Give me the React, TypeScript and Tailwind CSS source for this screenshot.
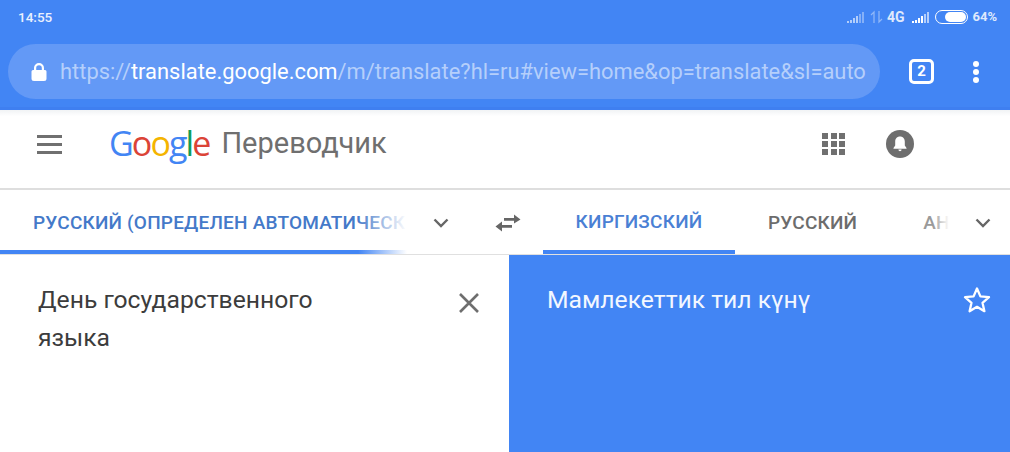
import React from "react";

const Chevron = () => (
  <svg width="16" height="10" viewBox="0 0 16 10" fill="none" stroke="#666" strokeWidth="2.4"><path d="M1.500 1.500 8 8l6.500-6.500" /></svg>
);

const Signal = ({ op = 1 }: { op?: number }) => (
  <svg width="18" height="12" viewBox="0 0 18 12" fill="#fff" opacity={op}>
    <rect x="0" y="10" width="2" height="2" /><rect x="3" y="9" width="2" height="3" /><rect x="6" y="7" width="2" height="5" /><rect x="9" y="5" width="2" height="7" /><rect x="12" y="3" width="2" height="9" opacity=".6" /><rect x="15" y="1" width="2" height="11" opacity=".6" />
  </svg>
);

export default function App() {
  return (
    <div className="w-[1010px] h-[452px] overflow-hidden bg-white flex flex-col font-['Roboto',sans-serif]">
      <div className="h-[110px] shrink-0 bg-[#4285f4] flex flex-col border-b-[3px] border-[#3f7ff0]">
        <div className="h-[44px] shrink-0 flex items-center justify-between pl-[18px] pr-[13px] pb-[10px] text-white font-medium">
          <span className="text-[#eaf1fe] text-[13.5px]">14:55</span>
          <div className="flex items-center text-[#dfe9fc] text-[13px] font-bold">
            <Signal op={0.6} />
            <svg className="ml-[5px] mr-[3px] opacity-40" width="14" height="14" viewBox="0 0 14 14" fill="none" stroke="#fff" strokeWidth="1.3"><path d="M4 13V2L1 5M9 1v11l3-3" /></svg>
            <span className="mr-[8px] text-[14px]">4G</span>
            <Signal />
            <div className="ml-[5px] mr-[4px] w-[33px] h-[14px] rounded-full border border-white p-[1px] flex justify-end">
              <div className="w-[21px] h-full rounded-full bg-white" />
            </div>
            <span>64%</span>
          </div>
        </div>
        <div className="flex items-center pl-[8px]">
          <div className="w-[872px] h-[55px] rounded-full bg-[#6399f6] flex items-center pl-[22px] pr-[13px] overflow-hidden">
            <svg className="shrink-0" width="18" height="20" viewBox="0 0 18 20"><path fill="#fff" d="M4 8V6a5 5 0 0 1 10 0v2h1a1.500 1.500 0 0 1 1.500 1.500v7A2.500 2.500 0 0 1 14 19H4a2.500 2.500 0 0 1-2.500-2.500v-7A1.500 1.500 0 0 1 3 8zm2.200 0h5.600V6a2.800 2.800 0 0 0-5.600 0z" /></svg>
            <div className="ml-[12px] pt-[2px] text-[21.9px] whitespace-nowrap overflow-hidden text-[#b5cffb]">
              https://<span className="text-white">translate.google.com</span>/m/translate?hl=ru#view=home&amp;op=translate&amp;sl=auto
            </div>
          </div>
          <div className="ml-[29px] w-[25px] h-[25px] rounded-[5px] border-[3px] border-white flex items-center justify-center text-white text-[15px] font-bold">2</div>
          <div className="ml-[39px] flex flex-col gap-[2px]">
            <div className="w-[6px] h-[6px] rounded-full bg-white" />
            <div className="w-[6px] h-[6px] rounded-full bg-white" />
            <div className="w-[6px] h-[6px] rounded-full bg-white" />
          </div>
        </div>
      </div>

      <div className="h-[80px] shrink-0 flex items-center border-b-2 border-[#dedede] bg-gradient-to-b from-[#f1f3f5] to-white to-[8%] pb-[10px] pr-[96px]">
        <div className="ml-[37px] w-[25px] flex flex-col gap-[5px]">
          <div className="h-[3px] bg-[#707070]" /><div className="h-[3px] bg-[#707070]" /><div className="h-[3px] bg-[#707070]" />
        </div>
        <div className="ml-[47px] text-[34px] tracking-[-1.9px] font-medium font-['Open_Sans',sans-serif] leading-none pb-[2px]">
          <span className="text-[#4285f4]">G</span><span className="text-[#db4437]">o</span><span className="text-[#f4b400]">o</span><span className="text-[#4285f4]">g</span><span className="text-[#0f9d58]">l</span><span className="text-[#db4437]">e</span>
        </div>
        <span className="ml-[12px] text-[29px] text-[#6f6f6f]">Переводчик</span>
        <div className="ml-auto grid grid-cols-3 gap-x-[2.5px] gap-y-[2px]">
          {Array.from({ length: 9 }).map((_, i) => <div key={i} className="w-[6px] h-[6px] bg-[#707070]" />)}
        </div>
        <div className="ml-[41px] w-[28px] h-[28px] rounded-full bg-[#6e6e6e] flex items-center justify-center">
          <svg width="18" height="18" viewBox="0 0 18 18" fill="#fff"><path d="M9 1.500c-3 0-4.800 2.300-4.800 5v4L2.500 13v.8h13V13l-1.700-2.500v-4c0-2.700-1.800-5-4.800-5zM7.400 14.600h3.200a1.600 1.600 0 0 1-3.200 0z" /></svg>
        </div>
      </div>

      <div className="h-[65px] shrink-0 flex border-b border-[#e0e0e0]">
        <div className="w-[407px] shrink-0 relative flex items-center pl-[33px] pt-[2px] overflow-hidden">
          <span className="whitespace-nowrap text-[19px] font-medium tracking-[0.2px] text-[#4479c9]">РУССКИЙ (ОПРЕДЕЛЕН АВТОМАТИЧЕСК</span>
          <div className="absolute right-0 top-0 h-full w-[50px] bg-gradient-to-r from-transparent to-white" />
          <div className="absolute left-0 bottom-0 w-full h-[4px] bg-gradient-to-r from-[#4285f4] from-[88%] to-transparent" />
        </div>
        <div className="ml-[26px] flex items-center pt-[2px]"><Chevron /></div>
        <div className="ml-[46px] flex items-center pt-[2px]">
          <svg width="26" height="20" viewBox="0 0 26 20" fill="#666"><path d="M9 5h10V1.500L25.500 6.500 19 10.500V7.800H9zM17 12H7V8.500L.5 13.500 7 18.500v-3.700h10z" /></svg>
        </div>
        <div className="ml-[22px] w-[192px] shrink-0 h-full border-b-[4px] border-[#4285f4] flex items-center justify-center text-[19px] font-medium tracking-[0.2px] text-[#4a80d4] pt-[5px]">КИРГИЗСКИЙ</div>
        <div className="ml-[33px] flex items-center pt-[2px] text-[19px] font-medium tracking-[0.2px] text-[#6c6c6c]">РУССКИЙ</div>
        <div className="ml-[66px] w-[26px] relative flex items-center pt-[2px] text-[19px] font-medium tracking-[0.2px] text-[#9a9a9a] whitespace-nowrap">
          АН
          <div className="absolute right-0 top-0 h-full w-[16px] bg-gradient-to-r from-transparent to-white" />
        </div>
        <div className="ml-[26px] flex items-center pt-[2px]"><Chevron /></div>
      </div>

      <div className="flex-1 flex">
        <div className="w-[509px] shrink-0 flex justify-between pl-[38px] pr-[29px] pt-[26px] text-[24.7px] leading-[38px] text-[#3c3c3c]">
          <div className="w-[300px]">День государственного языка</div>
          <svg className="mt-[11px]" width="22" height="22" viewBox="0 0 22 22" stroke="#6e6e6e" strokeWidth="2.600"><path d="M2 2l18 18M20 2 2 20" /></svg>
        </div>
        <div className="flex-1 bg-[#4285f4] flex justify-between pl-[38px] pr-[19px] pt-[26px] text-[24.7px] leading-[38px] text-[#f2f7ff]">
          <div>Мамлекеттик тил күнү</div>
          <svg className="mt-[5px]" width="28" height="27" viewBox="0 0 28 27" fill="none" stroke="#fff" strokeWidth="2.300" strokeLinejoin="round"><path d="M14 2.500l3.400 7.900 8.600.8-6.500 5.600 1.900 8.400L14 20.800l-7.400 4.400 1.900-8.400L2 11.200l8.600-.8z" /></svg>
        </div>
      </div>
    </div>
  );
}
